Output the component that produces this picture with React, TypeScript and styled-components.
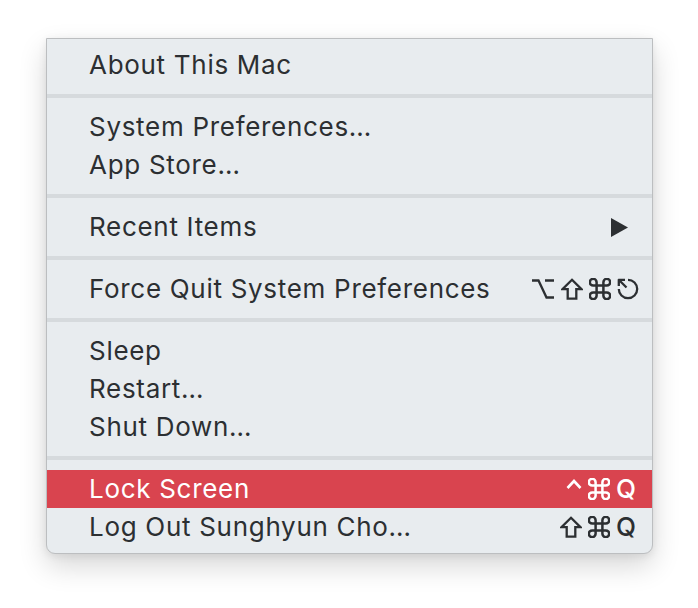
import React from "react";
import styled, { createGlobalStyle } from "styled-components";

const GlobalStyle = createGlobalStyle`
  html, body {
    margin: 0;
    padding: 0;
    background: #ffffff;
  }
  body {
    font-family: Inter, "Noto Sans", "DejaVu Sans", sans-serif;
  }
`;

const Page = styled.div`
  width: 698px;
  height: 608px;
  padding: 38px 0 0 46px;
  box-sizing: border-box;
`;

const Menu = styled.div`
  width: 607px;
  box-sizing: border-box;
  background: #e8ecef;
  border: 1px solid #bcbec0;
  border-radius: 0 0 9px 9px;
  padding: 7px 0 7px;
  box-shadow: 0 12px 28px rgba(0, 0, 0, 0.16), 0 2px 8px rgba(0, 0, 0, 0.08);
  display: flex;
  flex-direction: column;
`;

const Row = styled.div<{ $active?: boolean }>`
  height: 38px;
  display: flex;
  align-items: center;
  justify-content: space-between;
  padding: 0 16px 0 42px;
  font-size: 26px;
  letter-spacing: 0.7px;
  color: ${(p) => (p.$active ? "#ffffff" : "#2c2f32")};
  background: ${(p) => (p.$active ? "#d9444f" : "transparent")};
`;

const Label = styled.span`
  white-space: nowrap;
  margin-top: -2px;
`;

const Shortcut = styled.span<{ $shift?: number }>`
  display: flex;
  align-items: center;
  gap: 6px;
  margin-right: ${(p) => -(p.$shift ?? 0)}px;
  svg {
    display: block;
  }
`;

const QKey = styled.span`
  font-size: 26px;
  font-weight: 500;
  letter-spacing: 0;
  line-height: 1;
`;

const Separator = styled.div`
  height: 4px;
  margin: 10px 0;
  background: #d6dadd;
`;

const SW = 2.3;

const Arrow = () => (
  <svg width="19" height="19" viewBox="0 0 19 19" style={{ marginRight: 7 }}>
    <path d="M1 0 L18 9.5 L1 19 Z" fill="#2c2f32" />
  </svg>
);

const OptionIcon = ({ c }: { c: string }) => (
  <svg width="24" height="22" viewBox="0 0 24 22">
    <path d="M1 2.5 H7.5 L15.5 19.5 H23 M14 2.5 H23" fill="none" stroke={c} strokeWidth={SW} />
  </svg>
);

const ShiftIcon = ({ c }: { c: string }) => (
  <svg width="22" height="22" viewBox="0 0 22 22">
    <path
      d="M11 1.8 L20.5 11.2 H15.3 V20.6 H6.7 V11.2 H1.5 Z"
      fill="none"
      stroke={c}
      strokeWidth={SW}
      strokeLinejoin="miter"
    />
  </svg>
);

const CmdIcon = ({ c }: { c: string }) => (
  <svg width="22" height="22" viewBox="2.3 2.3 19.4 19.4">
    <path
      d="M15 6v12a3 3 0 1 0 3-3H6a3 3 0 1 0 3 3V6a3 3 0 1 0-3 3h12a3 3 0 1 0-3-3"
      fill="none"
      stroke={c}
      strokeWidth={2.2}
    />
  </svg>
);

const EscIcon = ({ c }: { c: string }) => (
  <svg width="22" height="22" viewBox="0 0 22 22">
    <path d="M11 1.8 A9.2 9.2 0 1 1 1.8 11" fill="none" stroke={c} strokeWidth={SW} />
    <path d="M1.8 1.2 V8 M1.2 1.8 H8 M1.8 1.8 L9.5 9.5" fill="none" stroke={c} strokeWidth={SW} />
  </svg>
);

const CtrlIcon = ({ c }: { c: string }) => (
  <svg width="16" height="22" viewBox="0 0 16 22">
    <path d="M1.5 10 L8 3 L14.5 10" fill="none" stroke={c} strokeWidth={2.6} />
  </svg>
);

export default function App() {
  const dark = "#2c2f32";
  const light = "#ffffff";
  return (
    <>
      <GlobalStyle />
      <Page>
        <Menu>
          <Row>
            <Label>About This Mac</Label>
          </Row>
          <Separator />
          <Row>
            <Label>System Preferences…</Label>
          </Row>
          <Row>
            <Label>App Store…</Label>
          </Row>
          <Separator />
          <Row>
            <Label>Recent Items</Label>
            <Arrow />
          </Row>
          <Separator />
          <Row>
            <Label>Force Quit System Preferences</Label>
            <Shortcut $shift={3}>
              <OptionIcon c={dark} />
              <ShiftIcon c={dark} />
              <CmdIcon c={dark} />
              <EscIcon c={dark} />
            </Shortcut>
          </Row>
          <Separator />
          <Row>
            <Label>Sleep</Label>
          </Row>
          <Row>
            <Label>Restart…</Label>
          </Row>
          <Row>
            <Label>Shut Down…</Label>
          </Row>
          <Separator />
          <Row $active>
            <Label>Lock Screen</Label>
            <Shortcut>
              <CtrlIcon c={light} />
              <CmdIcon c={light} />
              <QKey>Q</QKey>
            </Shortcut>
          </Row>
          <Row>
            <Label>Log Out Sunghyun Cho…</Label>
            <Shortcut>
              <ShiftIcon c={dark} />
              <CmdIcon c={dark} />
              <QKey>Q</QKey>
            </Shortcut>
          </Row>
        </Menu>
      </Page>
    </>
  );
}
